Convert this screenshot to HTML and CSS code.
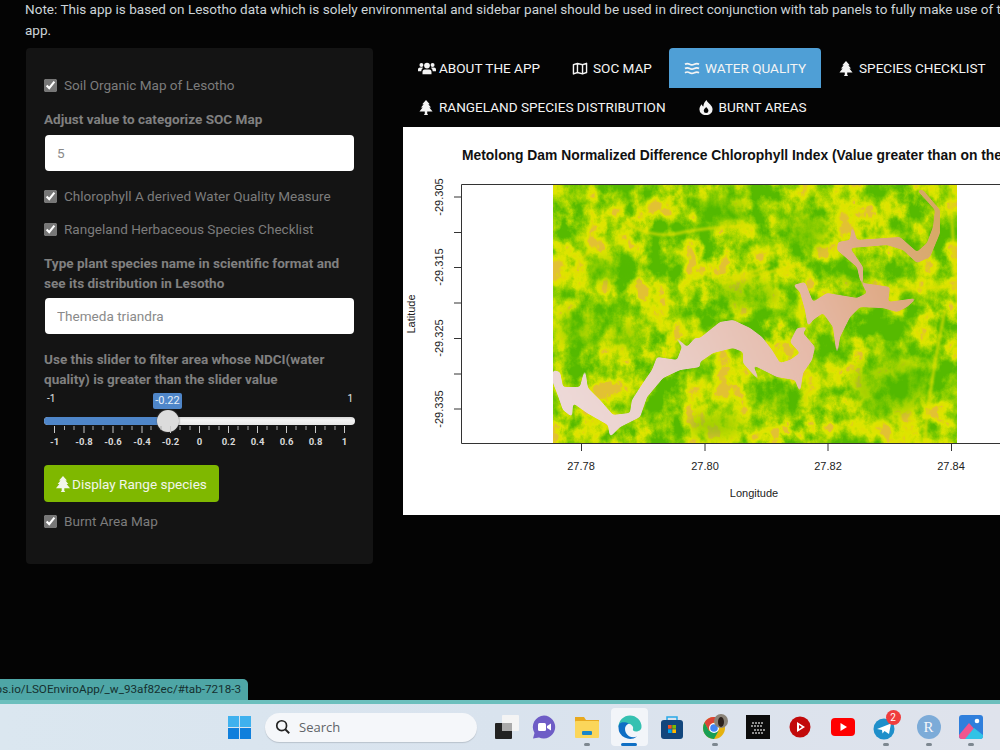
FILE: index.html
```html
<!DOCTYPE html>
<html lang="en">
<head>
<meta charset="utf-8">
<title>LSO Enviro App</title>
<link rel="stylesheet" href="styles.css">
</head>
<body>
<svg class="defs" width="0" height="0" aria-hidden="true">
  <defs>
    <symbol id="i-tree" viewBox="0 0 14 16"><path d="M7 0 11 4.600H9.500L12.300 8H10.600L14 12.300H8.300V14.700L9.300 16H4.700L5.700 14.700V12.300H0L3.400 8H1.700L4.500 4.600H3Z" fill="currentColor"/></symbol>
    <symbol id="i-users" viewBox="0 0 20 16"><g fill="currentColor"><circle cx="3.800" cy="4.200" r="2.200"/><circle cx="16.200" cy="4.200" r="2.200"/><circle cx="10" cy="4.800" r="3.200"/><path d="M0 11V9.200C0 7.800 1 7 2.200 7H4.500C5 7 5.300 7.200 5.600 7.500 4.400 8.200 3.800 9.300 3.700 11ZM20 11V9.200C20 7.800 19 7 17.800 7H15.500C15 7 14.700 7.200 14.400 7.500 15.600 8.200 16.200 9.300 16.300 11ZM5 14.500V12C5 10.200 6 9 7.600 9H12.400C14 9 15 10.200 15 12V14.500Z"/></g></symbol>
    <symbol id="i-map" viewBox="0 0 16 16"><path d="M1 4 5.300 2.500 10.700 4 15 2.500V12.300L10.700 13.800 5.300 12.300 1 13.800ZM5.300 2.500V12.300M10.700 4V13.800" fill="none" stroke="currentColor" stroke-width="1.500" stroke-linejoin="round"/></symbol>
    <symbol id="i-water" viewBox="0 0 16 16"><path d="M.5 3.500C2.500 2.300 3.500 2.300 5.500 3.500S8 4.700 10.500 3.500 13.500 2.300 15.500 3.500M.5 8C2.500 6.800 3.500 6.800 5.500 8S8 9.200 10.500 8 13.500 6.800 15.500 8M.5 12.500C2.500 11.300 3.500 11.300 5.500 12.500S8 13.700 10.500 12.500 13.500 11.300 15.500 12.500" fill="none" stroke="currentColor" stroke-width="1.800"/></symbol>
    <symbol id="i-fire" viewBox="0 0 14 16"><path fill-rule="evenodd" d="M7.500 0C8.500 2.500 10 3.200 11.500 4.800 13 6.400 14 8 14 10A7 6.200 0 0 1 0 10C0 8 .8 6.200 2.500 4.500 2.800 5.800 3.300 6.500 4.200 7 4.200 4.300 5.500 1.800 7.500 0ZM7.200 7.500C6 9 4.600 10 4.600 11.400A2.500 2.500 0 0 0 9.600 11.400C9.600 10 8.300 9 7.200 7.500Z" fill="currentColor"/></symbol>
    <filter id="terrain" x="0" y="0" width="100%" height="100%" color-interpolation-filters="sRGB">
      <feTurbulence type="fractalNoise" baseFrequency="0.016 0.02" numOctaves="2" seed="7" result="broad"/>
      <feTurbulence type="fractalNoise" baseFrequency="0.06 0.05" numOctaves="5" seed="23" result="fine"/>
      <feComposite in="broad" in2="fine" operator="arithmetic" k1="0" k2="0.42" k3="0.58" k4="0"/>
      <feColorMatrix type="matrix" values="3.200 0 0 0 -1.170  3.200 0 0 0 -1.170  3.200 0 0 0 -1.170  0 0 0 0 1"/>
      <feComponentTransfer>
        <feFuncR type="table" tableValues="0.34 0.40 0.49 0.58 0.68 0.80 0.87 0.88 0.89"/>
        <feFuncG type="table" tableValues="0.73 0.76 0.79 0.82 0.85 0.88 0.90 0.88 0.76"/>
        <feFuncB type="table" tableValues="0 0 0 0 0 0 0 0 0.2"/>
      </feComponentTransfer>
    </filter>
    <filter id="soft" x="-5%" y="-5%" width="110%" height="110%"><feGaussianBlur stdDeviation="0.8"/></filter>
    <filter id="blob" x="-20%" y="-20%" width="140%" height="140%"><feGaussianBlur stdDeviation="6"/></filter>
    <filter id="goo" x="-5%" y="-5%" width="110%" height="110%" color-interpolation-filters="sRGB">
      <feGaussianBlur stdDeviation="1.600"/>
      <feColorMatrix type="matrix" values="1 0 0 0 0  0 1 0 0 0  0 0 1 0 0  0 0 0 5 -1.900"/>
      <feGaussianBlur stdDeviation="0.5"/>
    </filter>
    <linearGradient id="water" gradientUnits="userSpaceOnUse" x1="553" y1="400" x2="940" y2="220">
      <stop offset="0" stop-color="#edd9d8"/>
      <stop offset=".3" stop-color="#e9cdc6"/>
      <stop offset=".62" stop-color="#e5b8a6"/>
      <stop offset=".8" stop-color="#dfab88"/>
      <stop offset="1" stop-color="#d6a964"/>
    </linearGradient>
  </defs>
</svg>

<div class="screen">
  <main class="app">
    <p class="note">Note: This app is based on Lesotho data which is solely environmental and sidebar panel should be used in direct conjunction with tab panels to fully make use of the app.</p>
    <div class="columns">
      <form class="sidebar">
        <label class="check"><input type="checkbox" checked><span>Soil Organic Map of Lesotho</span></label>
        <label class="field-label" for="soc">Adjust value to categorize SOC Map</label>
        <input class="text-input" id="soc" type="text" value="5">
        <label class="check check-tight"><input type="checkbox" checked><span>Chlorophyll A derived Water Quality Measure</span></label>
        <label class="check"><input type="checkbox" checked><span>Rangeland Herbaceous Species Checklist</span></label>
        <label class="field-label field-label-tight" for="species">Type plant species name in scientific format and see its distribution in Lesotho</label>
        <input class="text-input" id="species" type="text" value="Themeda triandra">
        <div class="field-label">Use this slider to filter area whose NDCI(water quality) is greater than the slider value</div>
        <div class="slider">
          <div class="slider-ends"><span>-1</span><span>1</span></div>
          <span class="slider-value">-0.22</span>
          <div class="slider-track"><div class="slider-fill"></div></div>
          <span class="slider-handle"></span>
          <svg class="slider-scale" width="312" height="32" viewBox="44 425 312 32">
            <g class="ticks-minor">
              <path d="M64.500 425v4M74 425v4M93 425v4M103 425v4M122 425v4M132 425v4M151 425v4M161 425v4M180 425v4M190 425v4M209 425v4M219 425v4M238 425v4M248 425v4M267 425v4M277 425v4M296 425v4M306 425v4M325 425v4M335 425v4"/>
            </g>
            <g class="ticks-major">
              <path d="M54.500 425v7M84 425v7M113 425v7M142 425v7M170.500 425v7M199.500 425v7M228.500 425v7M257.500 425v7M286.500 425v7M315.500 425v7M344.500 425v7"/>
            </g>
            <g class="tick-labels">
              <text x="54.500" y="444">-1</text><text x="84" y="444">-0.8</text><text x="113" y="444">-0.6</text><text x="142" y="444">-0.4</text><text x="170.500" y="444">-0.2</text><text x="199.500" y="444">0</text><text x="228.500" y="444">0.2</text><text x="257.500" y="444">0.4</text><text x="286.500" y="444">0.6</text><text x="315.500" y="444">0.8</text><text x="344.500" y="444">1</text>
            </g>
          </svg>
        </div>
        <button class="action" type="button"><svg class="icon icon-tree"><use href="#i-tree"/></svg>Display Range species</button>
        <label class="check check-last"><input type="checkbox" checked><span>Burnt Area Map</span></label>
      </form>

      <section class="content">
        <nav class="tabs">
          <a class="tab"><svg class="icon icon-users"><use href="#i-users"/></svg>About the app</a>
          <a class="tab"><svg class="icon icon-wide"><use href="#i-map"/></svg>SOC Map</a>
          <a class="tab tab-active"><svg class="icon icon-wide"><use href="#i-water"/></svg>Water Quality</a>
          <a class="tab"><svg class="icon icon-tree"><use href="#i-tree"/></svg>Species Checklist</a>
          <a class="tab tab-row2"><svg class="icon icon-tree"><use href="#i-tree"/></svg>Rangeland Species Distribution</a>
          <a class="tab tab-row2"><svg class="icon icon-tree"><use href="#i-fire"/></svg>Burnt Areas</a>
        </nav>
        <svg class="plot" width="597" height="388" viewBox="403 127 597 388">
          <rect x="403" y="127" width="597" height="388" fill="#fff"/>
          <text class="plot-title" x="462" y="160">Metolong Dam Normalized Difference Chlorophyll Index (Value greater than on the slider)</text>

          <svg x="553" y="185" width="404" height="258" viewBox="553 185 404 258">
            <rect x="553" y="185" width="404" height="258" filter="url(#terrain)"/>
            <g fill="#4fb800" opacity=".4" filter="url(#blob)">
              <ellipse cx="578" cy="328" rx="18" ry="20"/><ellipse cx="625" cy="335" rx="16" ry="10"/><ellipse cx="615" cy="270" rx="24" ry="12"/><ellipse cx="745" cy="295" rx="34" ry="14"/><ellipse cx="855" cy="275" rx="20" ry="12"/><ellipse cx="890" cy="385" rx="38" ry="30"/><ellipse cx="715" cy="425" rx="26" ry="12"/><ellipse cx="725" cy="210" rx="22" ry="14"/><ellipse cx="805" cy="230" rx="22" ry="20"/><ellipse cx="780" cy="400" rx="22" ry="12"/>
            </g>
            <g fill="none" stroke="#e2e000" stroke-width="3" opacity=".7" filter="url(#soft)">
              <path d="M625 222C640 232 660 238 680 233S720 228 742 226"/><path d="M553 285C565 280 578 265 590 250"/><path d="M722 283C745 278 770 272 800 265"/><path d="M925 443C926 410 935 360 945 310"/><path d="M890 291C915 288 935 288 957 286"/><path d="M700 272C715 280 735 282 770 265"/><path d="M950 190 957 300"/>
            </g>
            <path class="water" fill="url(#water)" filter="url(#goo)" d="M553 370 560 372 563 387 580 387 585 368 587 383 588 388 600 400 613 415 630 413 632 400 643 383 652 370 657 357 677 360 682 347 672 333 687 347 695 338 700 338 720 322 733 320 750 328 762 337 772 350 780 363 790 360 800 353 790 342 797 328 808 327 805 310 800 292 793 285 805 282 813 302 827 293 857 298 867 293 860 280 857 267 837 250 838 242 850 240 852 225 857 240 900 237 917 252 927 243 933 227 935 210 917 190 923 190 940 210 940 233 930 257 917 263 903 250 887 245 850 248 863 267 863 283 890 287 888 302 917 298 907 307 897 312 883 308 860 307 850 317 840 337 837 357 833 327 823 313 813 320 803 333 815 347 812 360 803 373 800 393 795 380 777 377 753 365 760 382 743 363 743 352 733 348 713 353 700 362 700 367 680 370 663 378 647 397 640 417 620 427 610 437 608 425 587 413 573 403 572 417 563 410 557 393 553 383Z"/>
          </svg>

          <g class="axis">
            <path d="M461.500 184.500H1000M461.500 443.500H1000M461.500 184.500V443.500"/>
            <path d="M461 197H454M461 232.500H454M461 267.500H454M461 303H454M461 338.500H454M461 374H454M461 409H454"/>
            <path d="M581.500 444V451M705 444V451M828 444V451M951.500 444V451"/>
          </g>
          <g class="plot-text">
            <text x="581" y="470" text-anchor="middle">27.78</text>
            <text x="705" y="470" text-anchor="middle">27.80</text>
            <text x="828" y="470" text-anchor="middle">27.82</text>
            <text x="951" y="470" text-anchor="middle">27.84</text>
            <text x="754" y="497" text-anchor="middle">Longitude</text>
            <text transform="translate(443 197) rotate(-90)" text-anchor="middle">-29.305</text>
            <text transform="translate(443 267) rotate(-90)" text-anchor="middle">-29.315</text>
            <text transform="translate(443 338) rotate(-90)" text-anchor="middle">-29.325</text>
            <text transform="translate(443 409) rotate(-90)" text-anchor="middle">-29.335</text>
            <text transform="translate(415 314) rotate(-90)" text-anchor="middle">Latitude</text>
          </g>
        </svg>
      </section>
    </div>
    <div class="status-link"><span>apps.io/LSOEnviroApp/_w_93af82ec/#tab-7218-3</span></div>
  </main>

  <footer class="taskbar">
    <svg class="win" width="23" height="23" viewBox="0 0 24 24">
      <path fill="#3fb1ee" d="M0 0H11.500V11.500H0ZM12.500 0H24V11.500H12.500Z"/>
      <path fill="#0f7fdc" d="M0 12.500H11.500V24H0ZM12.500 12.500H24V24H12.500Z"/>
    </svg>
    <div class="search">
      <svg width="16" height="16" viewBox="0 0 18 18"><circle cx="7.500" cy="7.500" r="5.500" fill="none" stroke="#222" stroke-width="1.900"/><path d="M11.500 11.500 16 16" stroke="#222" stroke-width="2.100"/></svg>
      <span>Search</span>
    </div>
    <div class="tray">
      <div class="app-icon app-icon-first">
        <svg width="26" height="26" viewBox="0 0 26 26"><rect x="1" y="9" width="17" height="16" rx="1" fill="#222"/><rect x="8" y="1" width="17" height="16" rx="1" fill="#f4f4f4"/><rect x="8" y="9" width="10" height="8" fill="#aaa"/></svg>
      </div>
      <div class="app-icon">
        <svg width="26" height="26" viewBox="0 0 26 26"><path d="M13 1.500A11.500 11.500 0 1 1 8 23.500L2 24.500 3.500 19A11.500 11.500 0 0 1 13 1.500Z" fill="#6e5dc6"/><rect x="7" y="9" width="8" height="8" rx="1.500" fill="#fff"/><path d="M16 12 20 9.500V16.500L16 14Z" fill="#fff"/></svg>
      </div>
      <div class="app-icon is-open">
        <svg width="26" height="26" viewBox="0 0 26 26"><path d="M1 3H10L12 6H25V8H1Z" fill="#e8a91f"/><rect x="1" y="7" width="24" height="17" rx="1" fill="#fbd65a"/><rect x="8" y="17" width="10" height="4" rx="1" fill="#1a86c8"/></svg>
      </div>
      <div class="app-icon is-active">
        <svg width="26" height="26" viewBox="0 0 26 26"><path d="M1.500 13A11.500 11.500 0 0 1 24.500 13C24.500 16 21.500 17.500 19 17.500 16.500 17.500 15.500 16 16 15 17 13 14 9 10 10 5.500 11 1.500 13 1.500 13Z" fill="#35c1b1"/><path d="M1.500 13C2 7 8 8 12 9.500 8 11 7 15 9 19 11 23 16 24 20 22.500A11.500 11.500 0 0 1 1.500 13Z" fill="#0f6fc4"/></svg>
        <span class="active-bar"></span>
      </div>
      <div class="app-icon">
        <svg width="24" height="26" viewBox="0 0 24 26"><path d="M7 6V3H17V6" fill="none" stroke="#29a9e8" stroke-width="1.500"/><rect x="1" y="6" width="22" height="19" rx="3" fill="#12467c"/><rect x="8" y="11" width="3.700" height="3.700" fill="#f25022"/><rect x="12.300" y="11" width="3.700" height="3.700" fill="#7fba00"/><rect x="8" y="15.300" width="3.700" height="3.700" fill="#00a4ef"/><rect x="12.300" y="15.300" width="3.700" height="3.700" fill="#ffb900"/></svg>
      </div>
      <div class="app-icon is-open">
        <svg width="26" height="26" viewBox="0 0 26 26"><circle cx="12" cy="14" r="11" fill="#e5b20f"/><path d="M12 3A11 11 0 0 0 2.500 8.500L7 17 12 8H22A11 11 0 0 0 12 3Z" fill="#db4437"/><path d="M2.500 8.500A11 11 0 0 0 12 25L16.500 17 7 17Z" fill="#189e54"/><circle cx="12" cy="14" r="5" fill="#fff"/><circle cx="12" cy="14" r="3.800" fill="#4285f4"/><circle cx="19" cy="7" r="7" fill="#8a8378"/><ellipse cx="19" cy="8" rx="3" ry="5" fill="#2b211c"/></svg>
      </div>
      <div class="app-icon">
        <svg width="24" height="24" viewBox="0 0 24 24"><rect width="24" height="24" fill="#0b0b0b"/><path d="M6 8H18M5 11H17M8 15H19M6 18H18" stroke="#bbb" stroke-width="1.500" stroke-dasharray="2 1"/></svg>
      </div>
      <div class="app-icon">
        <svg width="22" height="22" viewBox="0 0 22 22"><circle cx="11" cy="11" r="10.500" fill="#c20a0a"/><path d="M8 6 16 11 8 16ZM10 9V13L13 11Z" fill="#fff" fill-rule="evenodd"/></svg>
      </div>
      <div class="app-icon">
        <svg width="24" height="18" viewBox="0 0 24 18"><rect width="24" height="18" rx="4" fill="#f00"/><path d="M9.500 5 16 9 9.500 13Z" fill="#fff"/></svg>
      </div>
      <div class="app-icon is-open">
        <svg width="26" height="26" viewBox="0 0 26 26"><circle cx="11" cy="15" r="10.500" fill="#1f8fca"/><path d="M4 15 18 9.500 16 20 11.500 17 9.500 19.500 9 16Z" fill="#fff"/></svg>
        <span class="badge">2</span>
      </div>
      <div class="app-icon is-open">
        <span class="r-icon">R</span>
      </div>
      <div class="app-icon is-open">
        <svg width="24" height="24" viewBox="0 0 24 24"><rect width="24" height="24" rx="3" fill="#2f7fdc"/><circle cx="18" cy="6" r="2.300" fill="#fff"/><path d="M0 20 10 8 17 16 12 24H3Q0 24 0 21Z" fill="#f0558e"/><path d="M6 24 15 13 24 20V21Q24 24 21 24Z" fill="#31c3e6"/></svg>
      </div>
    </div>
  </footer>
</div>
</body>
</html>
```

FILE: styles.css
```css
* { box-sizing: border-box; }

html, body {
  margin: 0;
  height: 100%;
  overflow: hidden;
  background: #000;
}

body {
  font-family: Roboto, "Liberation Sans", sans-serif;
  font-size: 13.550px;
  line-height: 20px;
  color: #808080;
}

.defs { display: block; height: 0; }

.screen {
  width: 1000px;
  height: 750px;
  display: flex;
  flex-direction: column;
  overflow: hidden;
}

/* App area */
.app {
  position: relative;
  height: 700px;
  flex: none;
  background: #040404;
  padding-left: 25px;
  overflow: hidden;
}

.note {
  width: 1005px;
  margin: -1px 0 8px;
  line-height: 20.500px;
  color: #ccd4d8;
}

.columns {
  display: flex;
  align-items: flex-start;
  gap: 30px;
}

/* Sidebar */
.sidebar {
  flex: none;
  width: 347px;
  height: 516px;
  margin-left: 1px;
  padding: 27px 18px 0;
  background: #141414;
  border-radius: 4px;
  display: flex;
  flex-direction: column;
}

.check {
  display: flex;
  align-items: center;
  height: 20px;
  gap: 7px;
  margin-bottom: 14px;
  color: #7c7c7c;
}

.check-tight { margin-bottom: 13px; }

.check input {
  width: 13px;
  height: 13px;
  margin: 0;
  accent-color: #777;
}

.check-last { margin: 9px 0 0; }

.field-label {
  display: block;
  font-weight: 700;
  color: #808080;
  margin-bottom: 6px;
}

.field-label-tight { margin-bottom: 5px; }

.text-input {
  display: block;
  width: 309px;
  height: 36px;
  margin: 0 0 15px 1px;
  padding: 0 12px;
  border: 0;
  border-radius: 4px;
  background: #fff;
  font: 13.550px Roboto, "Liberation Sans", sans-serif;
  color: #8a8a8a;
}

/* Slider */
.slider {
  position: relative;
  height: 70px;
  margin-top: -4px;
  margin-bottom: 4px;
}

.slider-ends {
  display: flex;
  justify-content: space-between;
  padding: 1px 2px 0 3px;
  font-size: 10px;
  line-height: 14px;
  color: #e8e8e8;
}

.slider-value {
  position: absolute;
  left: 109px;
  top: 2px;
  width: 29px;
  height: 16px;
  border-radius: 2px;
  background: #4f86c9;
  color: #e9f0f8;
  font-size: 11px;
  line-height: 16px;
  text-align: center;
}

.slider-track {
  position: absolute;
  left: 0;
  top: 26px;
  width: 311px;
  height: 8px;
  border-radius: 4px;
  background: linear-gradient(#d8d8d8, #f4f4f4 40%, #e8e8e8);
  overflow: hidden;
}

.slider-fill {
  width: 124px;
  height: 100%;
  background: #4f86c9;
}

.slider-handle {
  position: absolute;
  left: 113px;
  top: 19px;
  width: 22px;
  height: 22px;
  border-radius: 50%;
  background: #dcdcdc;
  box-shadow: 0 0 2px #555;
}

.slider-scale {
  position: absolute;
  left: 0;
  top: 35px;
}

.ticks-minor path { stroke: #aaa; stroke-width: 1; fill: none; }
.ticks-major path { stroke: #c8c8c8; stroke-width: 1; fill: none; }

.tick-labels text {
  font: 700 9.500px Roboto, "Liberation Sans", sans-serif;
  fill: #d8d8d8;
  text-anchor: middle;
}

.action {
  display: flex;
  align-items: center;
  width: 175px;
  height: 37px;
  flex: none;
  padding: 0 12px;
  border: 0;
  border-radius: 4px;
  background: #7fb800;
  color: #f2f6ea;
  font: 13.550px Roboto, "Liberation Sans", sans-serif;
  white-space: nowrap;
}

/* Tabs */
.content {
  flex: none;
  width: 597px;
  overflow: hidden;
}

.tabs {
  display: flex;
  flex-wrap: wrap;
  width: 620px;
}

.tab {
  display: flex;
  align-items: center;
  height: 40px;
  padding: 0 15px;
  margin-right: 2px;
  border-radius: 4px 4px 0 0;
  color: #f4f4f4;
  text-transform: uppercase;
  white-space: nowrap;
}

.tab-row2 { height: 39px; padding-bottom: 1px; }

.tab-active {
  background: #4f9fd6;
}

.icon {
  flex: none;
  height: 16px;
  margin-right: 5px;
}

.icon-users { width: 18px; height: 15px; margin-right: 3px; }
.icon-wide { width: 16px; height: 15px; }
.icon-tree { width: 16px; height: 15px; }
.action .icon-tree { width: 14px; height: 16px; margin-right: 2px; }

.plot { display: block; }

.plot-title {
  font: 700 13.850px "Liberation Sans", Arial, sans-serif;
  fill: #111;
}

.axis path {
  fill: none;
  stroke: #333;
  stroke-width: 1;
}

.plot-text text {
  font: 11px "Liberation Sans", Arial, sans-serif;
  fill: #222;
}

/* Browser link tooltip */
.status-link {
  position: absolute;
  left: 0;
  bottom: 0;
  width: 248px;
  height: 21px;
  display: flex;
  justify-content: flex-end;
  padding-right: 7px;
  background: #4ea6a6;
  border-top-right-radius: 5px;
  overflow: hidden;
  color: #15302f;
  font: 11.700px/21px Roboto, "Liberation Sans", sans-serif;
  white-space: nowrap;
}

.status-link span { flex: none; }

/* Taskbar */
.taskbar {
  flex: 1;
  display: flex;
  align-items: center;
  padding: 0 8px 0 228px;
  border-top: 4px solid #6cbfbd;
  background: linear-gradient(90deg, #dbe7f0, #d9e3ee 50%, #dfe3ec);
}

.win { flex: none; margin-right: 14px; }

.search {
  flex: none;
  width: 212px;
  height: 29px;
  display: flex;
  align-items: center;
  gap: 8px;
  padding-left: 10px;
  border-radius: 15px;
  background: #f5f7fa;
  box-shadow: 0 1px 1px #b9c2cc;
  color: #606468;
  font: 13px "Open Sans", "Liberation Sans", sans-serif;
}

.tray {
  display: flex;
  margin-left: 8px;
}

.app-icon {
  position: relative;
  flex: none;
  width: 42.700px;
  height: 38px;
  display: flex;
  align-items: center;
  justify-content: center;
}

.app-icon-first { width: 38px; padding-left: 6px; }

.is-open::after {
  content: "";
  position: absolute;
  left: 50%;
  bottom: 0;
  width: 6px;
  height: 3px;
  margin-left: -3px;
  border-radius: 2px;
  background: #7d8790;
}

.is-active {
  background: rgba(255, 255, 255, .65);
  border-radius: 4px;
  margin: 0 3px;
  width: 36.700px;
}

.active-bar {
  position: absolute;
  left: 10px;
  bottom: 0;
  width: 16px;
  height: 3px;
  border-radius: 2px;
  background: #0f6fc4;
}

.badge {
  position: absolute;
  left: 21px;
  top: 2px;
  width: 15px;
  height: 15px;
  border-radius: 50%;
  background: #ef3d3d;
  color: #fff;
  font-size: 10px;
  line-height: 15px;
  text-align: center;
}

.r-icon {
  width: 24px;
  height: 24px;
  border-radius: 50%;
  background: #7cabd8;
  color: #f4f7fb;
  font: 15px/24px "Liberation Serif", serif;
  text-align: center;
}
```
